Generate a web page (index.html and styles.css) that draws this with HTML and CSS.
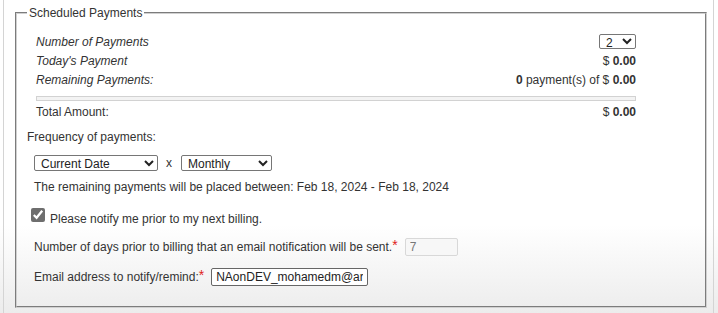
FILE: index.html
```html
<!DOCTYPE html>
<html>
<head>
    <title>Scheduled Payments</title>
    <link rel="stylesheet" href="styles.css">
</head>
<body>
    <div class="page">
        <fieldset class="sched">
            <legend>Scheduled Payments</legend>
            <table class="summary">
                <tr>
                    <td class="lbl">Number of Payments</td>
                    <td class="val">
                        <select class="num-sel">
                            <option>1</option>
                            <option selected>2</option>
                            <option>3</option>
                        </select>
                    </td>
                </tr>
                <tr>
                    <td class="lbl">Today's Payment</td>
                    <td class="val">$ <b>0.00</b></td>
                </tr>
                <tr>
                    <td class="lbl">Remaining Payments:</td>
                    <td class="val"><b>0</b> payment(s) of $ <b>0.00</b></td>
                </tr>
                <tr class="bar-row">
                    <td colspan="2"><div class="bar"></div></td>
                </tr>
                <tr>
                    <td>Total Amount:</td>
                    <td class="val">$ <b>0.00</b></td>
                </tr>
            </table>

            <div class="freq-label">Frequency of payments:</div>
            <div class="freq-row">
                <select class="start-sel">
                    <option>Current Date</option>
                </select>
                <span class="times">x</span>
                <select class="period-sel">
                    <option>Monthly</option>
                </select>
            </div>
            <div class="range">The remaining payments will be placed between: Feb 18, 2024 - Feb 18, 2024</div>

            <label class="notify">
                <input type="checkbox" checked>
                <span>Please notify me prior to my next billing.</span>
            </label>

            <div class="field-row">
                <span>Number of days prior to billing that an email notification will be sent.<span class="req">*</span></span>
                <input type="text" class="days" value="7" disabled>
            </div>
            <div class="field-row">
                <span>Email address to notify/remind:<span class="req">*</span></span>
                <input type="text" class="email" value="NAonDEV_mohamedm@arcserve.com">
            </div>
        </fieldset>
    </div>
</body>
</html>
```

FILE: styles.css
```css
body {
    margin: 0;
    font-family: "Liberation Sans", Arial, sans-serif;
    font-size: 12px;
    color: #333;
    background: linear-gradient(#fff 0, #fff 225px, #ececec 313px);
    height: 313px;
    overflow: hidden;
}
.page {
    margin: 0 4px 0 3px;
    padding: 6px 6px 0 11px;
    border-left: 1px solid #d4d4d4;
    border-right: 1px solid #d4d4d4;
    height: 307px;
}
.sched {
    margin: 0;
    padding: 8px 10px 20px 10px;
    border: 2px groove #d0d0d0;
}
.sched legend {
    padding: 0 2px;
    line-height: 14px;
    color: #333;
}
.summary {
    width: 600px;
    border-collapse: collapse;
    margin: 4px 0 0 9px;
}
.summary td {
    padding: 0;
    height: 19px;
    line-height: 14px;
}
.summary .lbl { font-style: italic; }
.summary .val { text-align: right; }
.summary .bar-row td {
    height: auto;
    padding: 7px 0 1px;
}
.bar {
    height: 3px;
    border: 1px solid #d2d2d2;
    background: #f3f3f3;
}
select {
    font-family: "Liberation Sans", Arial, sans-serif;
    font-size: 12px;
    color: #222;
    height: 16px;
    padding: 0 2px;
    border: 1px solid #767676;
    border-radius: 2px;
    background: #fff;
}
.num-sel { width: 37px; height: 15px; vertical-align: middle; }
.freq-label {
    margin-top: 9px;
    line-height: 14px;
}
.freq-row {
    margin: 11px 0 0 7px;
    display: flex;
    align-items: center;
    gap: 8px;
    height: 16px;
}
.start-sel { width: 124px; }
.period-sel { width: 91px; margin-left: 1px; }
.range {
    margin: 9px 0 0 7px;
    line-height: 14px;
}
.notify {
    display: flex;
    align-items: flex-start;
    margin-top: 14px;
    height: 14px;
}
.notify input {
    width: 14px;
    height: 14px;
    margin: 0 5px 0 4px;
    accent-color: #6e6e6e;
}
.notify span {
    margin-top: 4px;
    line-height: 14px;
}
.field-row {
    display: flex;
    align-items: center;
    gap: 7px;
    margin-left: 7px;
    height: 18px;
}
.field-row + .field-row { margin-top: 12px; }
.notify + .field-row { margin-top: 16px; }
.req {
    color: #e02020;
    font-size: 14px;
    vertical-align: top;
    line-height: 10px;
}
.field-row input {
    font-family: "Liberation Sans", Arial, sans-serif;
    font-size: 12px;
    height: 18px;
    box-sizing: border-box;
    padding: 1px 4px;
    border-radius: 2px;
}
.days {
    width: 53px;
    border: 1px solid #d8d8d8;
    background: #f7f7f7;
    color: #777;
}
.email {
    width: 157px;
    border: 1px solid #666;
    background: #fff;
    color: #222;
}
```
